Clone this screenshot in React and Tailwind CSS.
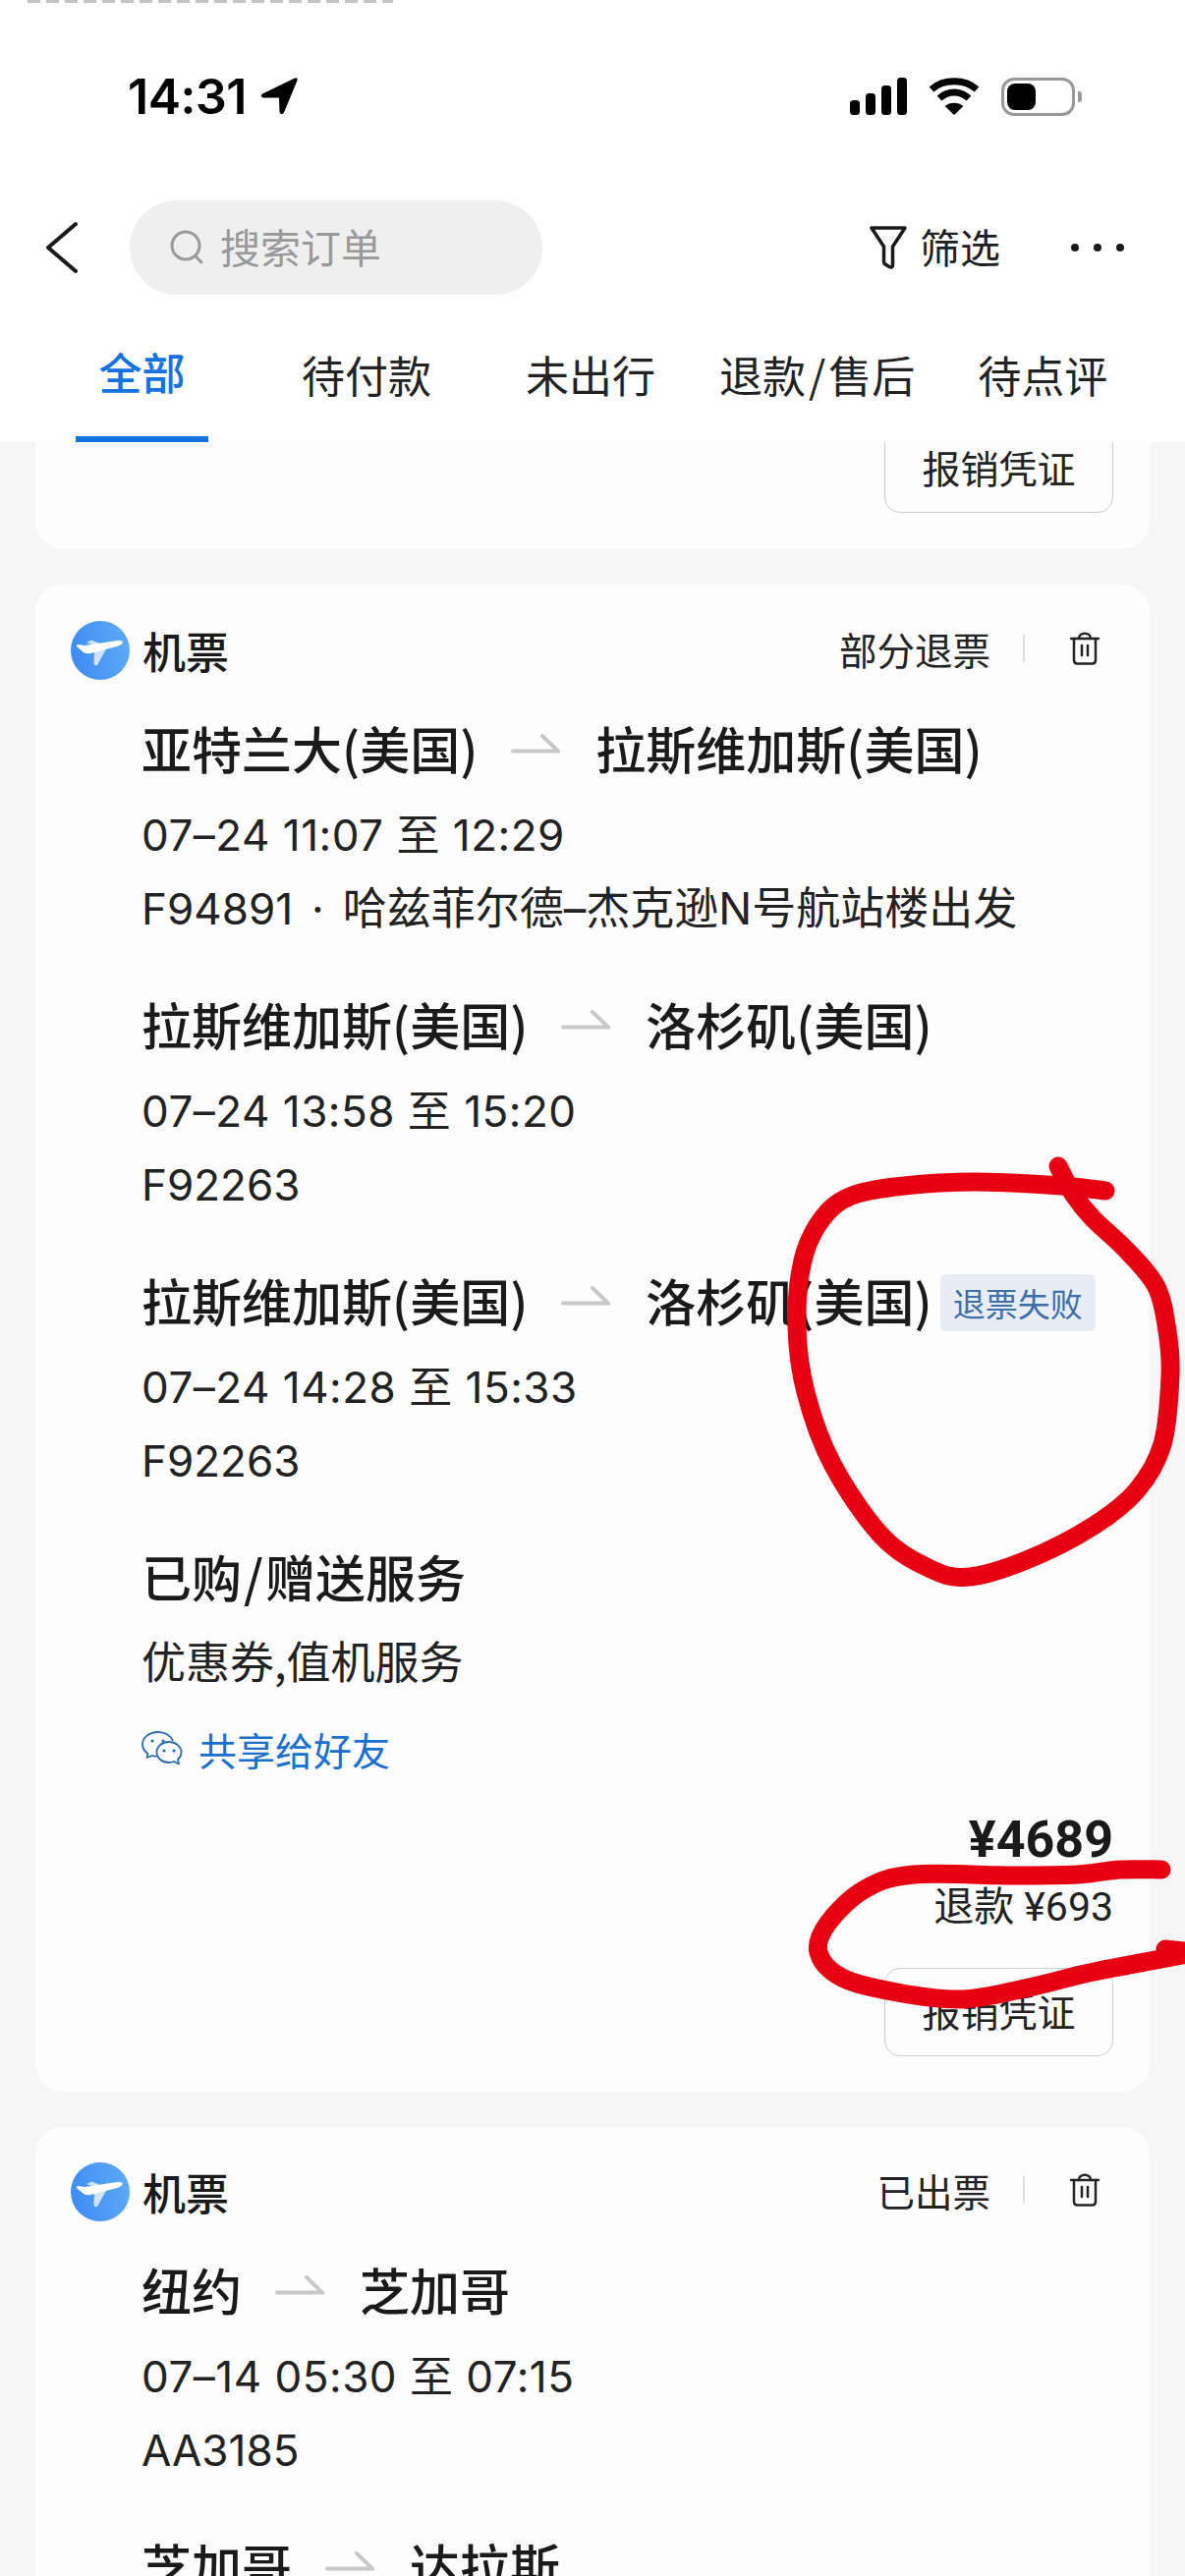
import React from 'react';

const FONT = "font-['Roboto','Noto_Sans_CJK_SC',sans-serif]";
const META = "font-['Inter','Noto_Sans_CJK_SC',sans-serif]";
const CJK = "font-['Noto_Sans_CJK_SC',sans-serif]";

// hand-drawn red marks, as points in page coordinates
const CIRCLE = [
  [1077, 1187], [1092, 1215], [1112, 1240], [1147, 1273], [1177, 1310], [1188, 1355], [1191, 1400], [1183, 1470], [1157, 1517],
  [1113, 1553], [1047, 1587], [987, 1605], [947, 1597], [897, 1563], [847, 1490], [820, 1417], [811, 1350],
  [817, 1283], [837, 1240], [867, 1217], [920, 1207], [993, 1203], [1080, 1207], [1125, 1212],
];
const SWOOSH = [
  [1182, 1903], [1140, 1903], [1097, 1908], [1030, 1909], [930, 1908], [880, 1923], [843, 1957], [833, 1987], [857, 2013],
  [913, 2028], [980, 2035], [1047, 2023], [1113, 2007], [1203, 1990],
];

function smooth(pts) {
  let d = `M${pts[0][0]} ${pts[0][1]}`;
  for (let i = 0; i < pts.length - 1; i++) {
    const p0 = pts[i - 1] || pts[i];
    const p1 = pts[i];
    const p2 = pts[i + 1];
    const p3 = pts[i + 2] || p2;
    const c1 = [p1[0] + (p2[0] - p0[0]) / 6, p1[1] + (p2[1] - p0[1]) / 6];
    const c2 = [p2[0] - (p3[0] - p1[0]) / 6, p2[1] - (p3[1] - p1[1]) / 6];
    d += ` C${c1[0]} ${c1[1]} ${c2[0]} ${c2[1]} ${p2[0]} ${p2[1]}`;
  }
  return d;
}

function StatusBar() {
  return (
    <div className="mt-[75px] h-[40px] flex items-center justify-between pl-[130px] pr-[105px] flex-shrink-0">
      <div className="flex items-center">
        <span className="font-['Inter',sans-serif] text-[50px] font-semibold text-black tracking-[-0.5px]">14:31</span>
        <svg width="40" height="40" viewBox="0 0 40 40" className="ml-[13px]">
          <path d="M36 1.5 L3 17.5 Q0 20 4 21.5 L20 21.5 L20.5 36 Q22 40 25 36.5 L38.5 4 Q39 0.5 36 1.5 Z" fill="#000" />
        </svg>
      </div>
      <div className="flex items-center">
        <svg width="58" height="38" viewBox="0 0 58 38" fill="#000">
          <rect x="0" y="23" width="10" height="15" rx="3.5" />
          <rect x="16" y="16" width="10" height="22" rx="3.5" />
          <rect x="32" y="8" width="10" height="30" rx="3.5" />
          <rect x="48" y="0" width="10" height="38" rx="3.5" />
        </svg>
        <svg width="52" height="38" viewBox="0 0 52 38" fill="none" stroke="#000" strokeWidth="7" className="ml-[22px]">
          <path d="M3 12 C15 1 37 1 49 12" />
          <path d="M11 21 C20 13 32 13 41 21" />
          <path d="M26 38 L16.5 29 C22 24.500 30 24.500 35.500 29 Z" fill="#000" stroke="none" />
        </svg>
        <div className="ml-[22px] w-[75px] h-[39px] rounded-[13px] border-[3.5px] border-[#999999] p-[3px]">
          <div className="w-[29px] h-full rounded-[8px] bg-black" />
        </div>
        <div className="ml-[3px] w-[4px] h-[11px] rounded-r-[3px] bg-[#999999]" />
      </div>
    </div>
  );
}

function NavBar() {
  return (
    <div className="mt-[86px] h-[96px] flex items-center flex-shrink-0">
      <svg width="40" height="56" viewBox="0 0 40 56" fill="none" stroke="#1a1a1a" strokeWidth="4" strokeLinecap="round" strokeLinejoin="round" className="ml-[43px]">
        <path d="M34 4 L6 28 L34 52" />
      </svg>
      <div className="ml-[49px] w-[420px] h-[96px] rounded-[48px] bg-[#efefef] flex items-center pl-[40px]">
        <svg width="38" height="38" viewBox="0 0 38 38" fill="none" stroke="#9a9a9a" strokeWidth="3" strokeLinecap="round">
          <ellipse cx="17" cy="17" rx="14" ry="14" />
          <path d="M27 28 L33 34" />
        </svg>
        <span className={`ml-[14px] pb-[2px] text-[41px] text-[#999999] ${CJK}`}>搜索订单</span>
      </div>
      <svg width="40" height="46" viewBox="0 0 40 46" fill="none" stroke="#1a1a1a" strokeWidth="3.500" strokeLinejoin="round" className="ml-[332px]">
        <path d="M3 3 H37 L24.500 22 V41 Q24.500 44 21 42.500 L17 40 Q15.500 39 15.500 37 V22 Z" />
      </svg>
      <span className={`ml-[12px] pb-[2px] text-[41px] text-[#1f1f1f] ${CJK}`}>筛选</span>
      <div className="ml-[72px] flex items-center gap-[15px]">
        <div className="w-[8px] h-[8px] rounded-full bg-[#1a1a1a]" />
        <div className="w-[8px] h-[8px] rounded-full bg-[#1a1a1a]" />
        <div className="w-[8px] h-[8px] rounded-full bg-[#1a1a1a]" />
      </div>
    </div>
  );
}

function Tabs() {
  return (
    <div className={`mt-[40px] h-[110px] flex items-start flex-shrink-0 text-[44px] text-[#222222] ${CJK}`}>
      <div className="ml-[77px] w-[135px] h-[110px] flex justify-center border-b-[6px] border-[#1573e0]">
        <span className="mt-[7px] h-[62px] leading-[62px] text-[#1573e0] font-medium">全部</span>
      </div>
      <span className="ml-[95px] mt-[10px] h-[62px] leading-[62px]">待付款</span>
      <span className="ml-[96px] mt-[10px] h-[62px] leading-[62px]">未出行</span>
      <span className="ml-[65px] mt-[10px] h-[62px] leading-[62px]">退款<span className="mx-[3px]">/</span>售后</span>
      <span className="ml-[64px] mt-[10px] h-[62px] leading-[62px]">待点评</span>
    </div>
  );
}

function PlaneBadge() {
  return (
    <svg width="60" height="60" viewBox="0 0 60 60">
      <defs>
        <linearGradient id="planeBg" x1="0" y1="0.6" x2="1" y2="0.4">
          <stop offset="0" stopColor="#3d8bf4" />
          <stop offset="1" stopColor="#5eaaf6" />
        </linearGradient>
      </defs>
      <circle cx="30" cy="30" r="30" fill="url(#planeBg)" />
      <path d="M24 29 L37 27 L27 45 Q24 46 23.500 43 Z" fill="#cfe3fb" />
      <path d="M16 22 L21 19.500 L30 23 L24 25 Z" fill="#cfe3fb" />
      <path d="M6 26 Q5 24 8 24 L14 25 L44 20.500 Q51 19.500 53 21 Q53 24 47 26 L20 33 Q16 34 13 32 Z" fill="#ffffff" />
    </svg>
  );
}

function TrashIcon() {
  return (
    <svg width="30" height="35" viewBox="0 0 30 35" fill="none" stroke="#222222" strokeWidth="2.500" strokeLinecap="round" strokeLinejoin="round">
      <path d="M1 8 H29" />
      <path d="M9 8 C9 1 21 1 21 8" />
      <path d="M4 8 V30 Q4 33.500 7.500 33.500 H22.500 Q26 33.500 26 30 V8" />
      <path d="M12 15 V25 M18 15 V25" />
    </svg>
  );
}

function RouteArrow({ className }) {
  return (
    <svg width="50" height="20" viewBox="0 0 50 20" fill="none" stroke="#c8c8c8" strokeWidth="4" strokeLinecap="round" className={className}>
      <path d="M2 17.500 H48 L32 2" />
    </svg>
  );
}

function WechatIcon() {
  return (
    <svg width="42" height="36" viewBox="0 0 42 36" fill="none" stroke="#2a6cb0" strokeWidth="1.800" strokeLinejoin="round">
      <path d="M17 1 C8 1 1 6.500 1 13.500 C1 17.500 3.500 21 6.500 23 L5.500 27 L11 25 C12.500 25.500 14 25.800 15.500 25.800" />
      <path d="M17 1 C24 1 30 4.500 32 10" />
      <path d="M28 11 C34.500 11 40.500 15.500 40.500 21.500 C40.500 24.500 39 27 37 29 L38 33.500 L33 31 C31.500 31.500 30 32 28 32 C21 32 15.500 27.500 15.500 21.500 C15.500 15.500 21 11 28 11 Z" />
      <circle cx="11" cy="10" r="1.600" fill="#2a6cb0" stroke="none" />
      <circle cx="22" cy="10" r="1.600" fill="#2a6cb0" stroke="none" />
      <circle cx="23" cy="20" r="1.600" fill="#2a6cb0" stroke="none" />
      <circle cx="33" cy="20" r="1.600" fill="#2a6cb0" stroke="none" />
    </svg>
  );
}

function CardHeader({ status }) {
  return (
    <div className="h-[60px] flex items-center pl-[36px] pr-[51px]">
      <PlaneBadge />
      <span className={`ml-[13px] text-[44px] font-medium text-[#1a1a1a] ${CJK}`}>机票</span>
      <span className={`ml-auto -mt-[2px] text-[38.500px] text-[#222222] ${CJK}`}>{status}</span>
      <div className="ml-[33px] w-[2px] h-[28px] -mt-[4px] bg-[#e0e0e0]" />
      <div className="ml-[46px] -mt-[6px]"><TrashIcon /></div>
    </div>
  );
}

function Segment({ from, to, time, flight, badge, first }) {
  return (
    <div className={first ? 'mt-[40px]' : 'mt-[58px]'}>
      <div className={`h-[64px] pb-[6px] flex items-center text-[51px] font-medium text-[#1a1a1a] whitespace-nowrap ${CJK}`}>
        <span>{from}</span>
        <RouteArrow className="ml-[34px] mr-[36px] -mt-[8px]" />
        <span>{to}</span>
        {badge && (
          <span className="ml-[8px] mt-[6px] h-[58px] px-[13px] rounded-[6px] bg-[#e8edf5] text-[33px] font-normal leading-[58px] text-[#3f6ea8]">
            {badge}
          </span>
        )}
      </div>
      {time && <div className={`mt-[24px] h-[60px] leading-[60px] text-[44px] tracking-[0.5px] text-[#222222] whitespace-nowrap ${META}`}>{time}</div>}
      {flight && <div className={`mt-[15px] h-[60px] leading-[60px] text-[44px] text-[#222222] whitespace-nowrap ${META}`}>{flight}</div>}
    </div>
  );
}

function ReceiptButton() {
  return (
    <div className={`w-[233px] h-[90px] pb-[3px] rounded-[16px] border-[1.5px] border-[#cccccc] flex items-center justify-center text-[39px] text-[#222222] ${CJK}`}>
      报销凭证
    </div>
  );
}

export default function App() {
  return (
    <div className="relative w-[1206px] h-[2622px] overflow-hidden bg-[#f6f6f6] flex flex-col">
      <header className="h-[450px] bg-[#fefefe] flex flex-col flex-shrink-0">
        <div className="ml-[28px] w-[372px] h-[3px] flex-shrink-0 bg-[repeating-linear-gradient(90deg,#c4c4c4_0_13px,#fefefe_13px_19px)]" />
        <StatusBar />
        <NavBar />
        <Tabs />
      </header>

      <main className="flex-1 overflow-hidden px-[36px] flex flex-col gap-[36px]">
        <section className="-mt-[18px] bg-[#fdfdfd] rounded-b-[28px] flex justify-end pr-[37px] pb-[37px] flex-shrink-0">
          <ReceiptButton />
        </section>

        <section className="bg-[#fdfdfd] rounded-[28px] pt-[37px] pb-[36px] flex-shrink-0">
          <CardHeader status="部分退票" />
          <div className="pl-[108px]">
            <Segment
              first
              from="亚特兰大(美国)"
              to="拉斯维加斯(美国)"
              time="07–24 11:07 至 12:29"
              flight={<>F94891<span className="mx-[19px]">·</span><span className="text-[45px]">哈兹菲尔德–杰克逊N号航站楼出发</span></>}
            />
            <Segment from="拉斯维加斯(美国)" to="洛杉矶(美国)" time="07–24 13:58 至 15:20" flight="F92263" />
            <Segment from="拉斯维加斯(美国)" to="洛杉矶(美国)" time="07–24 14:28 至 15:33" flight="F92263" badge="退票失败" />
            <div className={`mt-[58px] h-[64px] pb-[6px] leading-[58px] text-[51px] font-medium text-[#1a1a1a] ${CJK}`}>已购<span className="mx-[2px]">/</span>赠送服务</div>
            <div className={`mt-[24px] h-[60px] pb-[6px] leading-[54px] text-[45px] text-[#222222] ${CJK}`}>优惠券,值机服务</div>
            <div className="mt-[30px] h-[60px] pb-[6px] flex items-center">
              <WechatIcon />
              <span className={`ml-[16px] text-[39px] text-[#1a6fd0] ${CJK}`}>共享给好友</span>
            </div>
          </div>
          <div className="flex flex-col items-end pr-[37px]">
            <div className="mt-[30px] h-[60px] leading-[60px] font-['Roboto',sans-serif] text-[52px] font-bold text-[#1a1a1a]">¥4689</div>
            <div className={`mt-[6px] h-[60px] pt-[2px] leading-[60px] text-[41px] text-[#222222] ${FONT}`}>退款 ¥693</div>
            <div className="mt-[34px]"><ReceiptButton /></div>
          </div>
        </section>

        <section className="bg-[#fdfdfd] rounded-t-[28px] pt-[36px] flex-shrink-0">
          <CardHeader status="已出票" />
          <div className="pl-[108px]">
            <Segment first from="纽约" to="芝加哥" time="07–14 05:30 至 07:15" flight="AA3185" />
            <Segment from="芝加哥" to="达拉斯" />
          </div>
        </section>
      </main>

      <svg viewBox="0 0 1206 2622" fill="none" stroke="#e60012" strokeWidth="19" strokeLinecap="round" strokeLinejoin="round" className="absolute inset-0 w-full h-full pointer-events-none">
        <path d={smooth(CIRCLE)} />
        <path d={smooth(SWOOSH)} />
        <path d="M1186 1984 L1206 1986" />
      </svg>
    </div>
  );
}
